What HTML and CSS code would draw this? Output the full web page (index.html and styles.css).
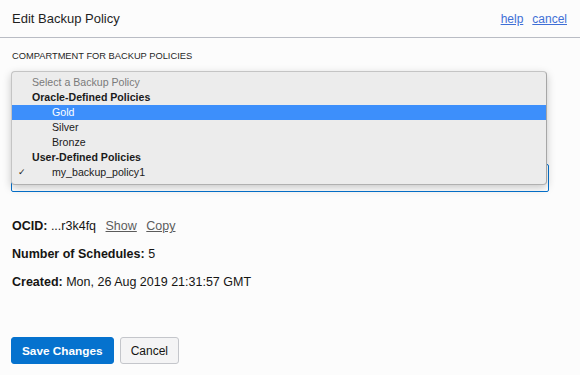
FILE: index.html
```html
<!DOCTYPE html>
<html lang="en">
<head>
  <meta charset="UTF-8" />
  <title>Edit Backup Policy</title>
  <link rel="stylesheet" href="styles.css">
</head>
<body>
  <div class="header">
    <h1>Edit Backup Policy</h1>
    <div class="header-links">
      <a href="#">help</a>
      <a href="#">cancel</a>
    </div>
  </div>

  <div class="content">
    <label class="field-label">Compartment for Backup Policies</label>

    <div class="select-wrap">
      <div class="select-box"></div>

      <ul class="dropdown">
        <li class="group placeholder">Select a Backup Policy</li>
        <li class="group">Oracle-Defined Policies</li>
        <li class="option active">Gold</li>
        <li class="option">Silver</li>
        <li class="option">Bronze</li>
        <li class="group">User-Defined Policies</li>
        <li class="option checked"><span class="check">✓</span>my_backup_policy1</li>
      </ul>
    </div>

    <div class="details">
      <div class="detail-row">
        <b>OCID:</b> ...r3k4fq
        <a class="action" href="#">Show</a>
        <a class="action" href="#">Copy</a>
      </div>
      <div class="detail-row"><b>Number of Schedules:</b> 5</div>
      <div class="detail-row"><b>Created:</b> Mon, 26 Aug 2019 21:31:57 GMT</div>
    </div>

    <div class="buttons">
      <button class="btn primary">Save Changes</button>
      <button class="btn">Cancel</button>
    </div>
  </div>
</body>
</html>
```

FILE: styles.css
```css
* {
  box-sizing: border-box;
}

body {
  margin: 0;
  background-color: #fcfcfc;
  color: #161513;
  font-family: "Liberation Sans", Arial, Helvetica, sans-serif;
}

.header {
  height: 38px;
  border-bottom: 1px solid #b9bcc4;
  display: flex;
  justify-content: space-between;
  align-items: center;
  padding: 0 13px 0 12px;
}

h1 {
  margin: 0;
  font-size: 13px;
  font-weight: normal;
  color: #1f1f1f;
}

.header-links {
  display: flex;
  gap: 9px;
  font-size: 12px;
}

.header-links a {
  color: #3f6fd6;
  text-decoration: underline;
}

.content {
  padding: 0 12px;
}

.field-label {
  display: block;
  margin-top: 13px;
  font-size: 9.3px;
  line-height: 11px;
  text-transform: uppercase;
  color: #1f1f1f;
}

.select-wrap {
  position: relative;
  margin-top: 102px;
  margin-left: -1px;
  width: 538px;
}

.select-box {
  height: 28px;
  border: 1px solid #0572ce;
  border-radius: 2px;
  background-color: #ffffff;
}

.dropdown {
  position: absolute;
  left: 0;
  top: -93px;
  width: 536px;
  margin: 0;
  padding: 3px 0 4px;
  list-style: none;
  background-color: #ececec;
  border: 1px solid #c4c4c4;
  border-right-color: #a6a6a6;
  border-bottom-color: #b0b0b0;
  border-radius: 4px;
  box-shadow: 0 3px 9px rgba(0, 0, 0, 0.22);
  font-size: 10.6px;
}

.dropdown li {
  height: 15px;
  line-height: 15px;
  color: #1a1a1a;
}

.group {
  padding-left: 20px;
  font-weight: bold;
}

.group.placeholder {
  font-weight: normal;
  color: #7a7a7a;
}

.option {
  position: relative;
  padding-left: 40px;
}

.option.active {
  background-color: #3d8ffb;
  color: #ffffff;
}

.check {
  position: absolute;
  left: 6px;
  font-family: "DejaVu Sans", sans-serif;
  font-size: 9px;
}

.details {
  margin-top: 26px;
  font-size: 12.5px;
  display: flex;
  flex-direction: column;
  gap: 12px;
}

.detail-row {
  line-height: 16px;
}

.action {
  color: #5c5c5c;
  text-decoration: underline;
  margin-left: 6px;
}

.buttons {
  display: flex;
  gap: 6px;
  margin-top: 47px;
  margin-left: -1px;
}

.btn {
  height: 27px;
  padding: 0 10px;
  font-family: "Liberation Sans", Arial, sans-serif;
  font-size: 12px;
  border: 1px solid #c4c6cb;
  border-radius: 3px;
  background-color: #f4f4f5;
  color: #161513;
}

.btn.primary {
  background-color: #0572ce;
  border-color: #0572ce;
  color: #ffffff;
  font-weight: bold;
  padding: 0 10px;
  font-size: 11.8px;
}
```
